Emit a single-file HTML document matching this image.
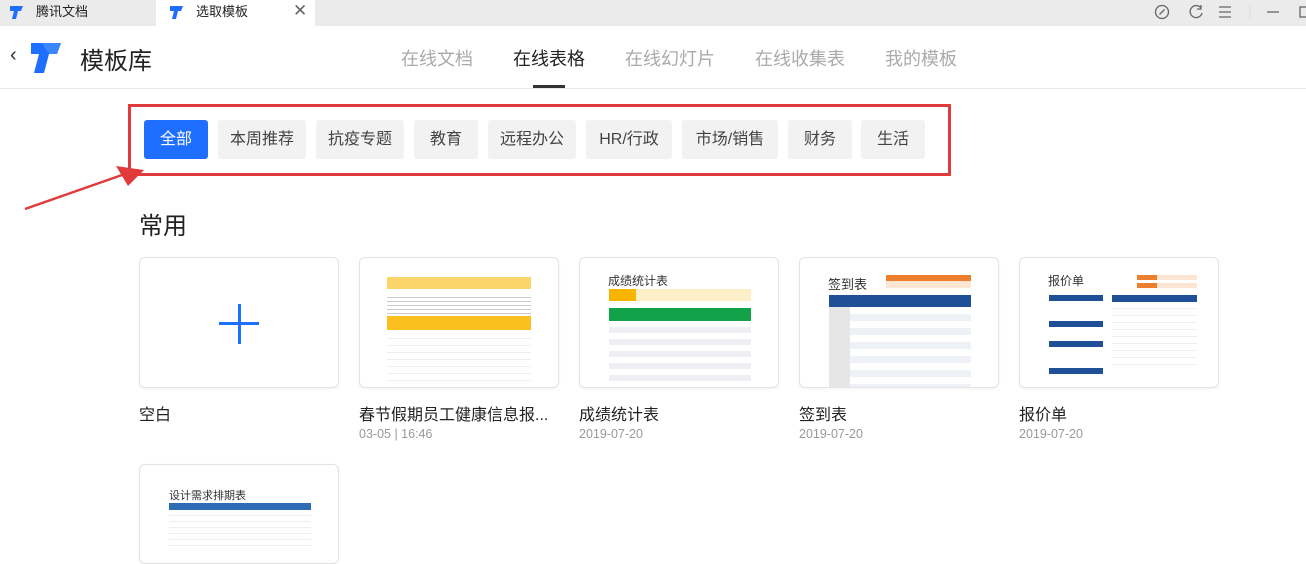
<!DOCTYPE html><html><head><meta charset="utf-8"><style>
*{margin:0;padding:0;box-sizing:border-box}
body{width:1306px;height:549px;overflow:hidden;background:#fff;font-family:"Liberation Sans","Noto Sans CJK SC",sans-serif;position:relative;color:#222}
.abs{position:absolute}
.tabbar{left:0;top:0;width:1306px;height:26px;background:#ebebeb}
.tab{top:0;height:26px;font-size:13px;line-height:23px;color:#222}
.btn{top:120px;height:39px;border-radius:3px;background:#f2f2f2;color:#444;font-size:16px;line-height:39px;text-align:center}
.nav{top:45px;font-size:18px;color:#aaa}
.card{width:200px;height:131px;border:1px solid #e3e3e3;border-radius:6px;background:#fff;overflow:hidden;box-shadow:0 1px 3px rgba(0,0,0,.05)}
.ct{font-size:16px;color:#222;top:401px}
.cd{font-size:12.5px;color:#999;top:427px}
</style></head><body>
<div class="abs tabbar"></div>
<div class="abs" style="left:156px;top:0;width:159px;height:26px;background:#fff"></div>
<svg class="abs" style="left:9px;top:4px" width="16" height="16" viewBox="0 0 16 16"><path d="M1 2h13l-2 5H9l-2 8H3l2-8H1z" fill="#1e6fff"/></svg>
<div class="abs tab" style="left:36px">腾讯文档</div>
<svg class="abs" style="left:169px;top:4px" width="16" height="16" viewBox="0 0 16 16"><path d="M1 2h13l-2 5H9l-2 8H3l2-8H1z" fill="#1e6fff"/></svg>
<div class="abs tab" style="left:196px">选取模板</div>
<div class="abs" style="left:293px;top:1px;font-size:17px;color:#666">✕</div>
<svg class="abs" style="left:1150px;top:3px" width="156" height="18" viewBox="0 0 156 18" fill="none" stroke="#666" stroke-width="1.3"><circle cx="12" cy="9" r="6.5"/><path d="M9.5 11.5l5-5"/><path d="M51 5a6 6 0 1 0 1 5M51 2v4h-4"/><path d="M69 4h12M69 9h12M69 14h12"/><path d="M100 2v14" stroke="#ddd"/><path d="M117 9h12"/><rect x="150" y="4" width="8" height="10"/></svg>
<div class="abs" style="left:10px;top:44px;font-size:20px;color:#333">‹</div>
<svg class="abs" style="left:28px;top:43px" width="34" height="30" viewBox="0 0 34 30"><path d="M3 0h30l-4 11h-8l-5 19H6l5-19H3z" fill="#1e6fff"/><path d="M14 0h19l-4 11h-8z" fill="#3a86ff"/></svg>
<div class="abs" style="left:80px;top:41px;font-size:24px;color:#222">模板库</div>
<div class="abs nav" style="left:401px">在线文档</div>
<div class="abs nav" style="left:513px;color:#222">在线表格</div>
<div class="abs" style="left:533px;top:85px;width:32px;height:3px;background:#333"></div>
<div class="abs nav" style="left:625px">在线幻灯片</div>
<div class="abs nav" style="left:755px">在线收集表</div>
<div class="abs nav" style="left:885px">我的模板</div>
<div class="abs" style="left:0;top:88px;width:1306px;height:1px;background:#e8e8e8"></div>
<div class="abs" style="left:128px;top:104px;width:823px;height:72px;border:3px solid #e03a3a"></div>
<div class="abs btn" style="left:144px;width:64px;background:#1e6fff;color:#fff">全部</div>
<div class="abs btn" style="left:218px;width:88px">本周推荐</div>
<div class="abs btn" style="left:316px;width:88px">抗疫专题</div>
<div class="abs btn" style="left:414px;width:64px">教育</div>
<div class="abs btn" style="left:488px;width:88px">远程办公</div>
<div class="abs btn" style="left:586px;width:86px">HR/行政</div>
<div class="abs btn" style="left:682px;width:96px">市场/销售</div>
<div class="abs btn" style="left:788px;width:64px">财务</div>
<div class="abs btn" style="left:861px;width:64px">生活</div>
<svg class="abs" style="left:0;top:160px" width="160" height="60"><path d="M25 49L122 15" stroke="#e03a3a" stroke-width="2.5"/><path d="M144 10L116 6L128 26z" fill="#e03a3a"/></svg>
<div class="abs" style="left:139px;top:206px;font-size:24px;color:#222">常用</div>

<div class="abs card" style="left:139px;top:257px"><div class="abs" style="left:79px;top:64px;width:40px;height:3px;background:#1e6fff"></div><div class="abs" style="left:98px;top:46px;width:3px;height:40px;background:#1e6fff"></div></div>
<div class="abs card" style="left:359px;top:257px"><div class="abs" style="left:27px;top:19px;width:144px;height:12px;background:#fbd46a"></div><div class="abs" style="left:27px;top:36px;width:144px;height:20px;background:repeating-linear-gradient(#fff 0 3px,#ccc 3px 4px)"></div><div class="abs" style="left:27px;top:58px;width:144px;height:14px;background:#fbbf1e"></div><div class="abs" style="left:27px;top:74px;width:144px;height:57px;background:repeating-linear-gradient(#fff 0 6px,#eee 6px 7px)"></div></div>
<div class="abs card" style="left:579px;top:257px"><div class="abs" style="left:28px;top:14px;font-size:12px;color:#333">成绩统计表</div><div class="abs" style="left:29px;top:31px;width:142px;height:12px;background:#fdefc8"></div><div class="abs" style="left:29px;top:31px;width:27px;height:12px;background:#f7b500"></div><div class="abs" style="left:29px;top:50px;width:142px;height:13px;background:#12a34a"></div><div class="abs" style="left:29px;top:63px;width:142px;height:68px;background:repeating-linear-gradient(#fff 0 6px,#eef0f4 6px 12px)"></div></div>
<div class="abs card" style="left:799px;top:257px"><div class="abs" style="left:28px;top:16px;font-size:13px;color:#333">签到表</div><div class="abs" style="left:86px;top:17px;width:85px;height:6px;background:#ee7f2e"></div><div class="abs" style="left:86px;top:23px;width:85px;height:7px;background:#fbe6d4"></div><div class="abs" style="left:29px;top:37px;width:142px;height:12px;background:#1f4f96"></div><div class="abs" style="left:29px;top:49px;width:142px;height:82px;background:repeating-linear-gradient(#fff 0 7px,#eef1f6 7px 14px)"></div><div class="abs" style="left:29px;top:49px;width:21px;height:82px;background:#e6e6e6"></div></div>
<div class="abs card" style="left:1019px;top:257px"><div class="abs" style="left:28px;top:14px;font-size:12px;color:#333">报价单</div><div class="abs" style="left:117px;top:17px;width:60px;height:5px;background:#fbe6d4"></div><div class="abs" style="left:117px;top:17px;width:20px;height:5px;background:#ee7f2e"></div><div class="abs" style="left:117px;top:25px;width:60px;height:5px;background:#fbe6d4"></div><div class="abs" style="left:117px;top:25px;width:20px;height:5px;background:#ee7f2e"></div><div class="abs" style="left:29px;top:37px;width:54px;height:6px;background:#1f4f96"></div><div class="abs" style="left:29px;top:63px;width:54px;height:6px;background:#1f4f96"></div><div class="abs" style="left:29px;top:83px;width:54px;height:6px;background:#1f4f96"></div><div class="abs" style="left:29px;top:110px;width:54px;height:6px;background:#1f4f96"></div><div class="abs" style="left:92px;top:37px;width:85px;height:7px;background:#1f4f96"></div><div class="abs" style="left:92px;top:44px;width:85px;height:64px;background:repeating-linear-gradient(#fff 0 6px,#eee 6px 7px)"></div></div>
<div class="abs ct" style="left:139px">空白</div>
<div class="abs ct" style="left:359px">春节假期员工健康信息报...</div><div class="abs cd" style="left:359px">03-05 | 16:46</div>
<div class="abs ct" style="left:579px">成绩统计表</div><div class="abs cd" style="left:579px">2019-07-20</div>
<div class="abs ct" style="left:799px">签到表</div><div class="abs cd" style="left:799px">2019-07-20</div>
<div class="abs ct" style="left:1019px">报价单</div><div class="abs cd" style="left:1019px">2019-07-20</div>
<div class="abs card" style="left:139px;top:464px;height:100px"><div class="abs" style="left:29px;top:22px;font-size:11px;color:#333">设计需求排期表</div><div class="abs" style="left:29px;top:38px;width:142px;height:7px;background:#2e6bb5"></div><div class="abs" style="left:29px;top:45px;width:142px;height:40px;background:repeating-linear-gradient(#fff 0 5px,#eee 5px 6px)"></div></div>
</body></html>
